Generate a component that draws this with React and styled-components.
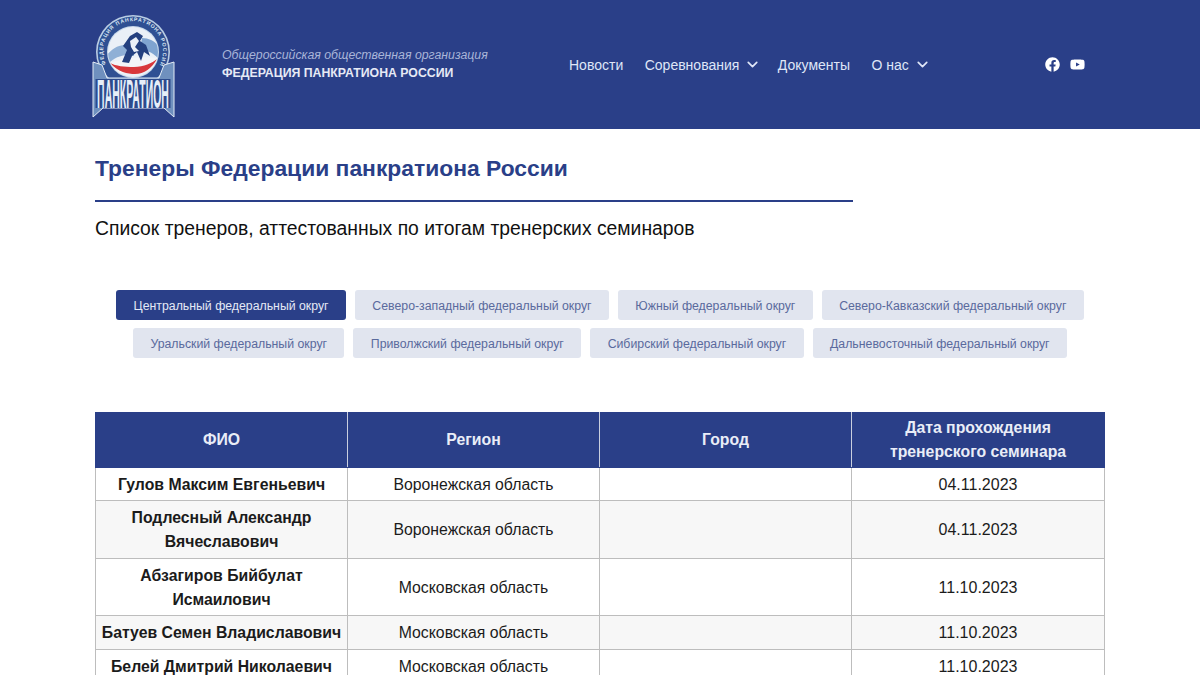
import React from 'react';
import styled, { createGlobalStyle } from 'styled-components';
import { FaFacebook, FaYoutube } from 'react-icons/fa';
import { FiChevronDown } from 'react-icons/fi';

const Global = createGlobalStyle`
  html, body { margin: 0; padding: 0; background: #fff; overflow: hidden; height: 675px; }
  body { font-family: "Liberation Sans", Arial, sans-serif; color: #000; }
`;
const Header = styled.header`
  height: 129px; background: #2a3f88; display: flex; align-items: center; padding-left: 92px;
`;
const LogoBox = styled.div`width: 84px; height: 106px; margin-top: 4px; flex: none;`;
const Org = styled.div`margin-left: 46px; width: 347px; flex: none; display: flex; flex-direction: column; gap: 3px; margin-top: -1px;`;
const OrgTop = styled.div`font-size: 12.3px; line-height: 15px; font-style: italic; color: #a9b5d8;`;
const OrgName = styled.div`font-size: 12.3px; line-height: 15px; font-weight: 700; color: #e6eaf5;`;
const Nav = styled.nav`display: flex; align-items: center; gap: 21.5px; font-size: 14px; color: #dfe6f7;`;
const NavItem = styled.span`display: inline-flex; align-items: center; gap: 5px;`;
const Chevron = styled(FiChevronDown)`margin-right: -5px; stroke-width: 2.4;`;
const Social = styled.div`display: flex; gap: 10px; margin-left: 119px; color: #fff; font-size: 15px; align-items: center;`;
const Main = styled.main`padding: 0 95px;`;
const Title = styled.h1`margin: 25px 0 0; font-size: 22.85px; line-height: 28px; font-weight: 700; color: #2a3f88;`;
const Rule = styled.div`width: 758px; height: 2px; background: #2a3f88; margin-top: 18px;`;
const Sub = styled.p`margin: 16px 0 0; font-size: 19.33px; line-height: 22px; color: #111;`;
const Tabs = styled.div`margin-top: 50px; display: flex; flex-direction: column; gap: 8px; align-items: center;`;
const TabRow = styled.div`display: flex; gap: 9px;`;
const Tab = styled.div`
  height: 30px; padding: 1px 17.4px 0; box-sizing: border-box; border-radius: 3px; display: flex; align-items: center;
  font-size: 12.3px; white-space: nowrap;
  background: ${p => p.$active ? '#2a3f88' : '#e1e5ef'};
  color: ${p => p.$active ? '#e4e9f6' : '#5a6a9d'};
`;
const Table = styled.table`
  margin-top: 54px; width: 1010px; border-collapse: collapse; table-layout: fixed; font-size: 15.8px; line-height: 24px;
`;
const Th = styled.th`
  box-sizing: border-box; width: 252px; background: #2a3f88; color: #e9edf7; font-weight: 700; text-align: center; padding: 3px 5px;
  border: 1px solid #c9cfdf; border-top-color: #2a3f88; border-bottom-color: #2a3f88;
  &:first-child { border-left-color: #2a3f88; }
  &:last-child { width: auto; border-right-color: #2a3f88; }
`;
const Tr = styled.tr`background: ${p => p.$alt ? '#f7f7f7' : '#fff'};`;
const Td = styled.td`
  border: 1px solid #bdbdbd; text-align: center; padding: 5px 5px 3.4px; color: #1b1b1b;
  font-weight: ${p => p.$name ? 700 : 400};
  font-size: ${p => p.$date ? '16px' : 'inherit'};
`;
const LogoRing = styled.text`font-family: "Liberation Sans", sans-serif; font-size: 5.2px; font-weight: 700; fill: #dbe6f2;`;

const Logo = () => (
  <svg viewBox="0 0 84 106" width="84" height="106" aria-label="Логотип">
    <defs>
      <path id="ringPath" d="M15 52A30 30 0 1 1 67 52" />
      <clipPath id="inner"><circle cx="41" cy="38" r="25" /></clipPath>
    </defs>
    <circle cx="41" cy="38" r="37" fill="#b9cde3" />
    <circle cx="41" cy="38" r="35.4" fill="#2f5093" />
    <LogoRing><textPath href="#ringPath" startOffset="2" textLength="122">ФЕДЕРАЦИЯ ПАНКРАТИОНА РОССИИ</textPath></LogoRing>
    <circle cx="41" cy="38" r="26" fill="#c7d8ea" />
    <g clipPath="url(#inner)">
      <rect x="10" y="10" width="64" height="60" fill="#eaf0f7" />
      <path d="M14 42C24 30 32 30 42 32L42 42C32 40 24 42 16 50Z" fill="#8fb0d6" />
      <path d="M50 24C58 24 64 28 68 34L66 44C60 38 54 36 48 36Z" fill="#7fa4d0" />
      <path d="M16 50C28 44 50 42 66 44L64 56L18 60Z" fill="#f3f5f8" />
      <path d="M18 49C26 58 36 60 43 60C52 60 60 54 65 45C60 49 52 53 42 53C32 53 24 52 18 49Z" fill="#d8383c" />
      <path d="M30 48L35 36L31 32L38 22L45 18L51 22L48 27L54 31L58 42L52 38L49 47L45 38L40 42L37 49Z" fill="#24407f" />
      <path d="M38 27L44 23L47 27L43 33L47 37L42 38L39 33Z" fill="#eaf0f7" />
    </g>
    <path d="M1 48L10 51L15 64H67L72 51L82 48V103L72 94H11L1 103Z" fill="#6f90be" stroke="#e3ebf5" strokeWidth="1" />
    <rect x="3.5" y="65" width="75" height="29" fill="#2c4a8c" />
    <text transform="translate(41 94) scale(0.262 1)" textAnchor="middle" fontFamily="Liberation Sans, sans-serif" fontSize="40" fontWeight="700" fill="#e6eef8">ПАНКРАТИОН</text>
  </svg>
);

const rows = [
  ['Гулов Максим Евгеньевич', 'Воронежская область', '04.11.2023'],
  ['Подлесный Александр Вячеславович', 'Воронежская область', '04.11.2023'],
  ['Абзагиров Бийбулат Исмаилович', 'Московская область', '11.10.2023'],
  ['Батуев Семен Владиславович', 'Московская область', '11.10.2023'],
  ['Белей Дмитрий Николаевич', 'Московская область', '11.10.2023'],
];
const tabs1 = ['Центральный федеральный округ', 'Северо-западный федеральный округ', 'Южный федеральный округ', 'Северо-Кавказский федеральный округ'];
const tabs2 = ['Уральский федеральный округ', 'Приволжский федеральный округ', 'Сибирский федеральный округ', 'Дальневосточный федеральный округ'];

export default function App() {
  return (
    <>
      <Global />
      <Header>
        <LogoBox><Logo /></LogoBox>
        <Org>
          <OrgTop>Общероссийская общественная организация</OrgTop>
          <OrgName>ФЕДЕРАЦИЯ ПАНКРАТИОНА РОССИИ</OrgName>
        </Org>
        <Nav>
          <NavItem>Новости</NavItem>
          <NavItem>Соревнования<Chevron size={17} /></NavItem>
          <NavItem>Документы</NavItem>
          <NavItem>О нас<Chevron size={17} /></NavItem>
        </Nav>
        <Social><FaFacebook /><FaYoutube /></Social>
      </Header>
      <Main>
        <Title>Тренеры Федерации панкратиона России</Title>
        <Rule />
        <Sub>Список тренеров, аттестованных по итогам тренерских семинаров</Sub>
        <Tabs>
          <TabRow>{tabs1.map((t, i) => <Tab key={t} $active={i === 0}>{t}</Tab>)}</TabRow>
          <TabRow>{tabs2.map(t => <Tab key={t}>{t}</Tab>)}</TabRow>
        </Tabs>
        <Table>
          <thead>
            <tr><Th>ФИО</Th><Th>Регион</Th><Th>Город</Th><Th>Дата прохождения тренерского семинара</Th></tr>
          </thead>
          <tbody>
            {rows.map((r, i) => (
              <Tr key={r[0]} $alt={i % 2 === 1}>
                <Td $name>{r[0]}</Td><Td>{r[1]}</Td><Td></Td><Td $date>{r[2]}</Td>
              </Tr>
            ))}
          </tbody>
        </Table>
      </Main>
    </>
  );
}
